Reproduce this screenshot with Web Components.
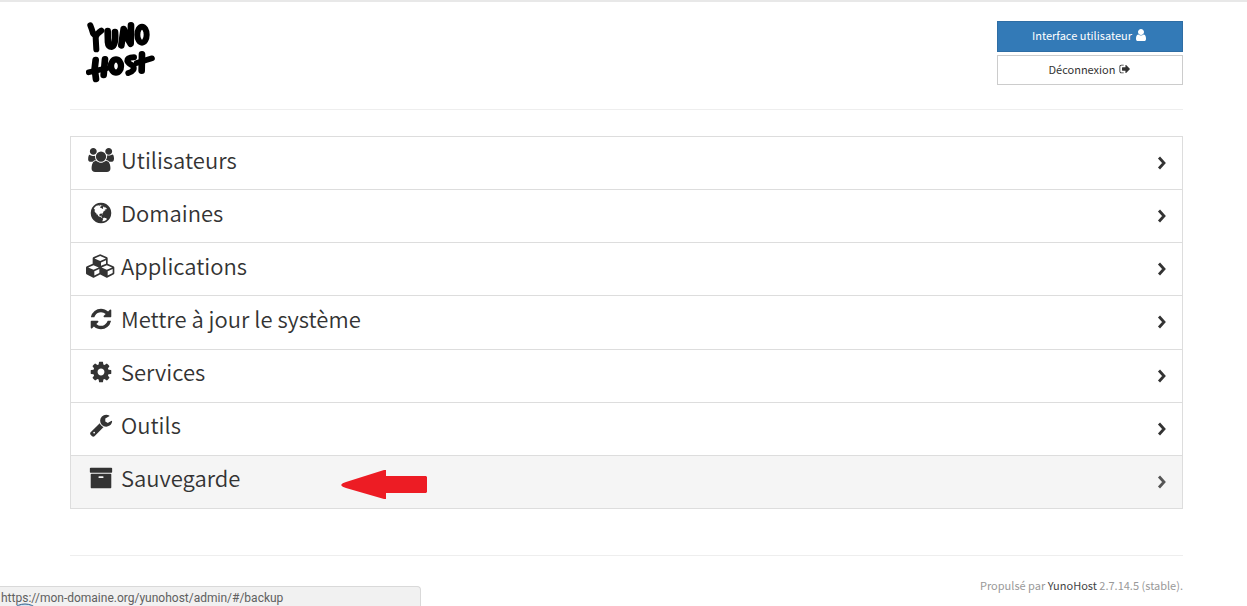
<!DOCTYPE html>
<html lang="fr">
<head>
<meta charset="utf-8">
<title>YunoHost admin</title>
<style>
  html, body { margin: 0; background: #fff; }
  body { font-family: "Noto Sans CJK SC", "Noto Sans", sans-serif; color: #333; }
</style>
</head>
<body>
<yuno-app>
  <yuno-header slot="header">
    <yuno-button variant="primary" icon="user">Interface utilisateur</yuno-button>
    <yuno-button icon="signout">Déconnexion</yuno-button>
  </yuno-header>
  <yuno-menu>
    <yuno-item icon="users" href="#/users">Utilisateurs</yuno-item>
    <yuno-item icon="globe" href="#/domains">Domaines</yuno-item>
    <yuno-item icon="cubes" href="#/apps">Applications</yuno-item>
    <yuno-item icon="refresh" href="#/update">Mettre à jour le système</yuno-item>
    <yuno-item icon="cog" href="#/services">Services</yuno-item>
    <yuno-item icon="wrench" href="#/tools">Outils</yuno-item>
    <yuno-item icon="archive" href="#/backup" active>Sauvegarde<red-arrow slot="mark"></red-arrow></yuno-item>
  </yuno-menu>
  <yuno-footer slot="footer"></yuno-footer>
</yuno-app>
<link-status>https://mon-domaine.org/yunohost/admin/#/backup</link-status>

<script>
const ICONS = {
  users: [1920, "M593 896q-162 5-265 128h-134q-82 0-138-40.5t-56-118.5q0-353 124-353 6 0 43.5 21t97.5 42.5 119 21.5q67 0 133-23-5 37-5 66 0 159 93 290zm1071 637q0 120-73 189.5t-194 69.5h-874q-121 0-194-69.5t-73-189.5q0-53 3.5-103.5t14-109 26.5-108.5 43-97.5 62-81 85.5-53.5 111.5-20q10 0 43 21.5t73 48 107 48 135 21.5 135-21.5 107-48 73-48 43-21.5q61 0 111.5 20t85.5 53.5 62 81 43 97.5 26.5 108.5 14 109 3.5 103.5zm-1024-1277q0 106-75 181t-181 75-181-75-75-181 75-181 181-75 181 75 75 181zm704 384q0 159-112.5 271.5t-271.5 112.5-271.5-112.5-112.5-271.5 112.5-271.5 271.5-112.5 271.5 112.5 112.5 271.5zm576 225q0 78-56 118.5t-138 40.5h-134q-103-123-265-128 93-131 93-290 0-29-5-66 66 23 133 23 59 0 119-21.5t97.5-42.5 43.5-21q124 0 124 353zm-128-609q0 106-75 181t-181 75-181-75-75-181 75-181 181-75 181 75 75 181z"],
  globe: [1792, "M896 128q209 0 385.5 103t279.5 279.5 103 385.5-103 385.5-279.5 279.5-385.5 103-385.5-103-279.5-279.5-103-385.5 103-385.5 279.5-279.5 385.5-103zm274 521q-2 1-9.5 9.5t-13.5 9.5q2 0 4.5-5t5-11 3.5-7q6-7 22-15 14-6 52-12 34-8 51 11-2-2 9.5-13t14.500-12q3-2 15-4.500t15-7.500l2-22q-12 1-17.500-7t-6.500-21q0 2-6 8 0-7-4.500-8t-11.500 1-9 1q-10-3-15-7.500t-8-16.500-4-15q-2-5-9.500-11t-9.500-10q-1-2-2.500-5.500t-3-6.500-4-5.500-5.500-2.500-7 5-7.500 10-4.500 5q-3-2-6-1.500t-4.500 1-4.500 3-5 3.500q-3 2-8.500 3t-8.500 2q15-5-1-11-10-4-16-3 9-4 7.500-12t-8.500-14h5q-1-4-8.500-8.500t-17.500-8.500-13-6q-8-5-34-9.500t-33-.5q-5 6-4.500 10.500t4 14 3.500 12.500q1 6-5.500 13t-6.500 12q0 7 14 15.500t10 21.500q-3 8-16 16t-16 12q-5 8-1.500 18.500t10.500 16.500q2 2 1.500 4t-3.500 4.500-5.500 4-6.500 3.500l-3 2q-11 5-20.500-6t-13.500-26q-7-25-16-30-23-8-29 1-5-13-41-26-25-9-58-4 6-1 0-15-7-15-19-12 3-6 4-17.500t1-13.500q3-13 12-23 1-1 7-8.500t9.500-13.500.5-6q35 4 50-11 5-5 11.500-17t10.500-17q9-6 14-5.500t14.500 5.500 14.500 5q14 1 15.500-11t-7.500-20q12 1 3-17-4-7-8-9-12-4-27 5-8 4 2 8-1-1-9.500 10.500t-16.500 17.500-16-5q-1-1-5.500-13.500t-9.500-13.500q-8 0-16 15 3-8-11-15t-24-8q19-12-8-27-7-4-20.500-5t-19.500 4q-5 7-5.500 11.500t5 8 10.500 5.500 11.500 4 8.500 3q14 10 8 14-2 1-8.500 3.500t-11.500 4.500-6 4q-3 4 0 14t-2 14q-5-5-9-17.500t-7-16.500q7 9-25 6l-10-1q-4 0-16 2t-20.500 1-13.500-8q-4-8 0-20 1-4 4-2-4-3-11-9.500t-10-8.500q-46 15-94 41 6 1 12-1 5-2 13-6.500t10-5.500q34-14 42-7l5-5q14 16 20 25-7-4-30-1-20 6-22 12 7 12 5 18-4-3-11.500-10t-14.500-11-15-5q-16 0-22 1-146 80-235 222 7 7 12 8 4 1 5 9t2.500 11 11.500-3q9 8 3 19 1-1 44 27 19 17 21 21 3 11-10 18-1-2-9-9t-9-4q-3 5 .5 18.500t10.500 12.500q-7 0-9.500 16t-2.500 35.500-1 23.500l2 1q-3 12 5.500 34.500t21.500 19.500q-13 3 20 43 6 8 8 9 3 2 12 7.500t15 10 10 10.500q4 5 10 22.500t14 23.500q-2 6 9.500 20t10.500 23q-1 0-2.500 1t-2.500 1q3 7 15.500 14t15.500 13q1 3 2 10t3 11 8 2q2-20-24-62-15-25-17-29-3-5-5.500-15.500t-4.500-14.500q2 0 6 1.500t8.500 3.500 7.500 4 2 3q-3 7 2 17.500t12 18.500 17 19 12 13q6 6 14 19.500t0 13.500q9 0 20 10.500t17 19.500q5 8 8 26t5 24q2 7 8.500 13.500t12.500 9.500l16 8 13 7q5 2 18.500 10.500t21.500 11.500q10 4 16 4t14.500-2.500 13.500-3.500q15-2 29 15t21 21q36 19 55 11-2 1 .5 7.500t8 15.500 9 14.500 5.500 8.500q5 6 18 15t18 15q6-4 7-9-3 8 7 20t18 10q14-3 14-32-31 15-49-18 0-1-2.500-5.500t-4-8.500-2.500-8.500 0-7.500 5-3q9 0 10-3.500t-2-12.500-4-13q-1-8-11-20t-12-15q-5 9-16 8t-16-9q0 1-1.500 5.500t-1.500 6.500q-13 0-15-1 1-3 2.500-17.500t3.500-22.500q1-4 5.500-12t7.500-14.500 4-12.500-4.500-9.500-17.500-2.500q-19 1-26 20-1 3-3 10.500t-5 11.500-9 7q-7 3-24 2t-24-5q-13-8-22.500-29t-9.500-37q0-10 2.500-26.500t3-25-5.500-24.500q3-2 9-9.500t10-10.500q2-1 4.500-1.500t4.500 0 4-1.500 3-6q-1-1-4-3-3-3-4-3 7 3 28.500-1.500t27.500 1.500q15 11 22-2 0-1-2.500-9.500t-.5-13.500q5 27 29 9 3 3 15.500 5t17.500 5q3 2 7 5.500t5.500 4.500 5-.5 8.500-6.500q10 14 12 24 11 40 19 44 7 3 11 2t4.500-9.500 0-14-1.500-12.500l-1-8v-18l-1-8q-15-3-18.500-12t1.500-18.500 15-18.500q1-1 8-3.500t15.500-6.500 12.500-8q21-19 15-35 7 0 11-9-1 0-5-3t-7.500-5-4.500-2q9-5 2-16 5-3 7.500-11t7.500-10q9 12 21 2 8-8 1-16 5-7 20.500-10.500t18.500-9.500q7 2 8-2t1-12 3-12q4-5 15-9t13-5l17-11q3-4 0-4 18 2 31-11 10-11-6-20 3-6-3-9.500t-15-5.500q3-1 11.500-.5t10.500-1.500q15-10-7-16-17-5-43 12zm-163 877q206-36 351-189-3-3-12.500-4.500t-12.500-3.500q-18-7-24-8 1-7-2.500-13t-8-9-12.500-8-11-7q-2-2-7-6t-7-5.500-7.500-4.500-8.500-2-10 1l-3 1q-3 1-5.500 2.500t-5.500 3-4 3 0 2.500q-21-17-36-22-5-1-11-5.500t-10.500-7-10-1.500-11.500 7q-5 5-6 15t-2 13q-7-5 0-17.500t2-18.500q-3-6-10.500-4.500t-12 4.500-11.500 8.500-9 6.500-8.500 5.500-8.500 7.500q-3 4-6 12t-5 11q-2-4-11.500-6.500t-9.500-5.500q2 10 4 35t5 38q7 31-12 48-27 25-29 40-4 22 12 26 0 7-8 20.500t-7 21.500q0 6 2 16z"],
  cubes: [2304, "M640 1632l384-192v-314l-384 164v342zm-64-454l404-173-404-173-404 173zm1088 454l384-192v-314l-384 164v342zm-64-454l404-173-404-173-404 173zm-448-293l384-165v-266l-384 164v267zm-64-379l441-189-441-189-441 189zm1088 518v416q0 36-19 67t-52 47l-448 224q-25 14-57 14t-57-14l-448-224q-4-2-7-4-2 2-7 4l-448 224q-25 14-57 14t-57-14l-448-224q-33-16-52-47t-19-67v-416q0-38 21.5-70t56.5-48l434-186v-400q0-38 21.5-70t56.5-48l448-192q23-10 50-10t50 10l448 192q35 16 56.5 48t21.5 70v400l434 186q36 16 57 48t21 70z"],
  refresh: [1792, "M1639 1056q0 5-1 7-64 268-268 434.5t-478 166.5q-146 0-282.5-55t-243.5-157l-129 129q-19 19-45 19t-45-19-19-45v-448q0-26 19-45t45-19h448q26 0 45 19t19 45-19 45l-137 137q71 66 161 102t187 36q134 0 250-65t186-179q11-17 53-117 8-23 30-23h192q13 0 22.5 9.5t9.5 22.5zm25-800v448q0 26-19 45t-45 19h-448q-26 0-45-19t-19-45 19-45l138-138q-148-137-349-137-134 0-250 65t-186 179q-11 17-53 117-8 23-30 23h-199q-13 0-22.5-9.5t-9.5-22.5v-7q65-268 270-434.5t480-166.5q146 0 284 55.5t245 156.5l130-129q19-19 45-19t45 19 19 45z"],
  cog: [1792, "M1152 896q0-106-75-181t-181-75-181 75-75 181 75 181 181 75 181-75 75-181zm512-109v222q0 12-8 23t-20 13l-185 28q-19 54-39 91 35 50 107 138 10 12 10 25t-9 23q-27 37-99 108t-94 71q-12 0-26-9l-138-108q-44 23-91 38-16 136-29 186-7 28-36 28h-222q-14 0-24.5-8.5t-11.5-21.5l-28-184q-49-16-90-37l-141 107q-10 9-25 9-14 0-25-11-126-114-165-168-7-10-7-23 0-12 8-23 15-21 51-66.5t54-70.5q-27-50-41-99l-183-27q-13-2-21-12.5t-8-23.5v-222q0-12 8-23t19-13l186-28q14-46 39-92-40-57-107-138-10-12-10-24 0-10 9-23 26-36 98.5-107.5t94.5-71.5q13 0 26 10l138 107q44-23 91-38 16-136 29-186 7-28 36-28h222q14 0 24.5 8.5t11.5 21.5l28 184q49 16 90 37l142-107q9-9 24-9 13 0 25 10 129 119 165 170 7 8 7 22 0 12-8 23-15 21-51 66.5t-54 70.5q26 50 41 98l183 28q13 2 21 12.5t8 23.5z"],
  wrench: [1792, "M448 1472q0-26-19-45t-45-19-45 19-19 45 19 45 45 19 45-19 19-45zm644-420l-682 682q-37 37-90 37-52 0-91-37l-106-108q-38-36-38-90 0-53 38-91l681-681q39 98 114.500 173.500t173.500 114.500zm634-435q0 39-23 106-47 134-164.500 217.500t-258.500 83.500q-185 0-316.500-131.500t-131.500-316.500 131.500-316.500 316.500-131.500q58 0 121.500 16.500t107.500 46.500q16 11 16 28t-16 28l-293 169v224l193 107q5-3 79-48.500t135.500-81 70.500-35.500q15 0 23.500 10t8.500 25z"],
  archive: [1792, "M1088 832q0-26-19-45t-45-19h-256q-26 0-45 19t-19 45 19 45 45 19h256q26 0 45-19t19-45zm576-192v960q0 26-19 45t-45 19h-1408q-26 0-45-19t-19-45v-960q0-26 19-45t45-19h1408q26 0 45 19t19 45zm64-448v256q0 26-19 45t-45 19h-1536q-26 0-45-19t-19-45v-256q0-26 19-45t45-19h1536q26 0 45 19t19 45z"],
  user: [1792, "M1536 1399q0 109-62.5 187t-150.5 78h-854q-88 0-150.500-78t-62.500-187q0-85 8.500-160.500t31.500-152 58.500-131 94-89 134.500-34.500q131 128 313 128t313-128q76 0 134.500 34.500t94 89 58.500 131 31.500 152 8.500 160.500zm-256-887q0 159-112.500 271.500t-271.500 112.500-271.500-112.500-112.500-271.500 112.500-271.500 271.500-112.500 271.500 112.500 112.500 271.500z"],
  signout: [1792, "M704 1440q0 4 1 20t.5 26.500-3 23.500-10 19.500-20.500 6.500h-320q-119 0-203.500-84.500t-84.500-203.500v-704q0-119 84.500-203.500t203.500-84.500h320q13 0 22.500 9.500t9.500 22.500q0 4 1 20t.5 26.500-3 23.500-10 19.500-20.500 6.500h-320q-66 0-113 47t-47 113v704q0 66 47 113t113 47h312l11.500 1 11.500 3 8 5.500 7 9 2 13.500zm928-544q0 26-19 45l-544 544q-19 19-45 19t-45-19-19-45v-288h-448q-26 0-45-19t-19-45v-384q0-26 19-45t45-19h448v-288q0-26 19-45t45-19 45 19l544 544q19 19 19 45z"]
};

// Icons share a 1792-unit em; wide ones keep their own advance width.
const icon = (name, em) => {
  const [w, d] = ICONS[name];
  return `<svg aria-hidden="true" viewBox="0 0 ${w} 1792" width="${Math.round(em * w / 1792)}" height="${em}"><path fill="currentColor" d="${d}"/></svg>`;
};

const define = (name, render) => customElements.define(name, class extends HTMLElement {
  constructor() {
    super();
    this.attachShadow({ mode: "open" });
  }
  connectedCallback() {
    this.shadowRoot.innerHTML = render(this);
  }
});

define("yuno-app", () => `
  <style>
    :host { display: block; border-top: 2px solid #e8e8e8; padding: 0 64px 0 70px; }
    main { padding: 26px 0 46px; }
  </style>
  <slot name="header"></slot>
  <main><slot></slot></main>
  <slot name="footer"></slot>`);

define("yuno-logo", () => `
  <style>
    :host { display: block; }
    svg { display: block; }
  </style>
  <svg role="img" aria-label="YunoHost" width="70" height="62" viewBox="12 15 210 186" fill="none" stroke="#000" stroke-linecap="round" stroke-linejoin="round">
    <g stroke-width="20">
      <path stroke-width="18" d="M25 28q5 12 8 24l9 9M58 44q-13 8-17 20l2 36"/>
      <path d="M77 45l1 34q1 13 11 13q13-4 10-44"/>
      <path d="M118 88l7-49q7 25 21 44l1-55"/>
      <ellipse cx="180" cy="56" rx="14" ry="24" stroke-width="18"/>
    </g>
    <g stroke-width="20">
      <path d="M41 132l-3 26l4 31M69 130l-4 47"/>
      <path stroke-width="17" d="M20 169l54-12"/>
      <ellipse cx="102" cy="150" rx="15" ry="20" stroke-width="19"/>
      <path stroke-width="18" d="M156 124q-20 0-20 11q3 8 17 14q8 15-14 22"/>
      <path d="M180 115l-1 49"/>
      <path stroke-width="17" d="M164 141l46-14"/>
    </g>
  </svg>`);

define("yuno-header", () => `
  <style>
    :host { display: flex; justify-content: space-between; align-items: flex-start; padding: 19px 0 24px; border-bottom: 1px solid #eee; }
    yuno-logo { margin-left: 16px; }
    nav { display: grid; gap: 3px; width: 186px; }
  </style>
  <yuno-logo></yuno-logo>
  <nav><slot></slot></nav>`);

define("yuno-button", el => `
  <style>
    :host { display: block; }
    button { display: flex; align-items: center; justify-content: center; gap: 4px; box-sizing: border-box; width: 100%; height: 30px; margin: 0; padding: 0 10px 2px; border: 1px solid #ccc; background: #fff; color: #333; font: inherit; font-size: 11px; line-height: 18px; cursor: pointer; }
    .primary { gap: 2px; height: 31px; padding-bottom: 3px; background: #337ab7; border-color: #2e6da4; color: #fff; }
  </style>
  <button type="button" class="${el.getAttribute("variant") || ""}"><span><slot></slot></span>${icon(el.getAttribute("icon"), el.getAttribute("variant") ? 14 : 12)}</button>`);

define("yuno-menu", () => `
  <style>
    :host { display: grid; grid-auto-rows: 1fr; min-height: 372px; border-bottom: 1px solid #ddd; }
  </style>
  <slot></slot>`);

define("yuno-item", el => `
  <style>
    :host { display: grid; position: relative; box-sizing: border-box; border: 1px solid #ddd; border-bottom: 0; }
    :host([active]) { background: #f5f5f5; }
    a { display: flex; align-items: center; padding: 0 15px; color: #333; text-decoration: none; }
    .icon { display: flex; justify-content: center; width: 30px; margin: 0 5px 7px 0; flex: none; }
    h2 { flex: 1; margin: 0 0 9px; font-size: 22px; font-weight: 350; line-height: 26px; }
    :host([active]) .go { color: #555; }
  </style>
  <a href="${el.getAttribute("href")}">
    <span class="icon">${icon(el.getAttribute("icon"), 24)}</span>
    <h2><slot></slot></h2>
    <svg class="go" aria-hidden="true" width="10" height="14" viewBox="0 0 10 14"><path d="M2 1.500l5 5.500-5 5.500" fill="none" stroke="currentColor" stroke-width="2.800"/></svg>
  </a>
  <slot name="mark"></slot>`);

// Hand-drawn marker that points at the current row.
define("red-arrow", () => `
  <style>
    :host { position: absolute; left: 270px; top: 14px; }
    svg { display: block; }
  </style>
  <svg aria-hidden="true" width="87" height="30" viewBox="0 0 87 30"><path fill="#ed1c24" d="M0 15q1-2 5-3L43 0h2v6h40l1 1v15l-1 1H45v6h-2L5 18q-4-1-5-3z"/></svg>`);

define("yuno-footer", () => `
  <style>
    :host { display: block; border-top: 1px solid #eee; padding-top: 19px; }
    p { margin: 0; text-align: right; color: #999; font-size: 11px; line-height: 20px; }
    a { color: #444; text-decoration: none; }
  </style>
  <p>Propulsé par <a href="https://yunohost.org">YunoHost</a> 2.7.14.5 (stable).</p>`);

// Browser status bubble, over the bottom left corner of the page.
define("link-status", () => `
  <style>
    :host { display: block; position: fixed; left: 0; bottom: 0; box-sizing: border-box; width: 421px; height: 20px; padding: 2px 0 0 1px; overflow: hidden; border: solid #d9d9d9; border-width: 1px 1px 0 0; border-top-right-radius: 4px; background: #f1f1f1; color: #606060; font: 12px/18px Roboto, sans-serif; }
    svg { position: absolute; left: 13px; bottom: 0; }
  </style>
  <slot></slot>
  <svg aria-hidden="true" width="24" height="3" viewBox="0 0 24 3"><circle cx="12" cy="18" r="17" fill="#d5e3f0" stroke="#2b5c8a" stroke-width="1"/></svg>`);
</script>
</body>
</html>
